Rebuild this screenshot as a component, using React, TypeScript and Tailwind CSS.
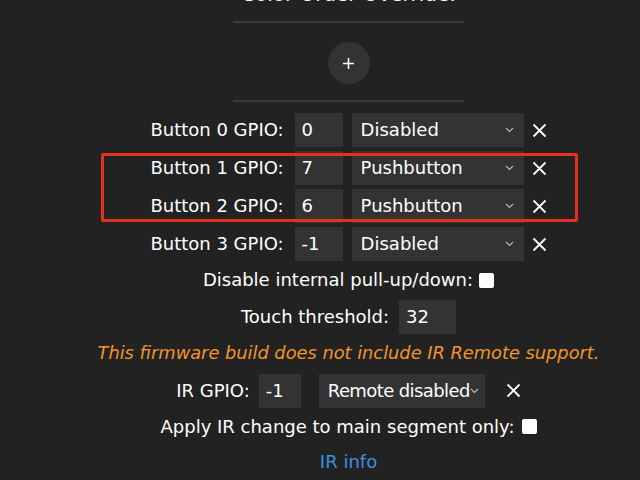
import React from "react";

const font = { fontFamily: '"DejaVu Sans", Verdana, sans-serif' };

const Chevron = () => (
  <svg width="9" height="6" viewBox="0 0 9 6" className="shrink-0">
    <path d="M1 1l3.5 3.5L8 1" fill="none" stroke="#bbb" strokeWidth="1.1" />
  </svg>
);

const Cross = () => (
  <svg width="15" height="15" viewBox="0 0 15 15" className="shrink-0">
    <path d="M1.5 1.5l12 12M13.5 1.5l-12 12" stroke="#fff" strokeWidth="1.8" />
  </svg>
);

const Field = ({ value, w }: { value: string; w: string }) => (
  <div className={`${w} h-[34px] bg-[#333] flex items-center pl-[7px] text-white`}>
    {value}
  </div>
);

const Select = ({ value, w, pr, tight }: { value: string; w: string; pr: string; tight?: boolean }) => (
  <div className={`${w} ${pr} h-[34px] bg-[#333] flex items-center justify-between pl-[9px] text-white`}>
    <span className={tight ? "whitespace-nowrap tracking-[-0.6px]" : "whitespace-nowrap"}>{value}</span>
    <Chevron />
  </div>
);

const Checkbox = () => <div className="w-[15px] h-[15px] bg-white rounded-[2px] shrink-0" />;

const buttons = [
  { n: 0, pin: "0", mode: "Disabled" },
  { n: 1, pin: "7", mode: "Pushbutton" },
  { n: 2, pin: "6", mode: "Pushbutton" },
  { n: 3, pin: "-1", mode: "Disabled" },
];

export default function App() {
  return (
    <div
      className="relative w-[640px] h-[480px] overflow-hidden bg-[#222] text-white text-[18px] leading-none"
      style={font}
    >
      <div className="pl-[57px] flex flex-col items-center">
        {/* section title, scrolled off the top */}
        <div className="-mt-[16px] h-[20px] text-[20px] whitespace-nowrap">Color Order Override:</div>
        <div className="mt-[17px] w-[231px] h-[2px] bg-[#3a3a3a]" />

        <div className="mt-[19px] w-[42px] h-[42px] rounded-full bg-[#333] flex items-center justify-center">
          <svg width="13" height="13" viewBox="0 0 13 13">
            <path d="M6.5 1v11M1 6.5h11" stroke="#fff" strokeWidth="1.6" />
          </svg>
        </div>
        <div className="mt-[16px] w-[231px] h-[2px] bg-[#3a3a3a]" />

        <div className="mt-[11px] flex flex-col items-center gap-[4px]">
          {buttons.map((b) => (
            <div key={b.n} className="flex items-center">
              <span className="mr-[11px] whitespace-nowrap">Button {b.n} GPIO:</span>
              <Field value={b.pin} w="w-[48px]" />
              <div className="w-[9px]" />
              <Select value={b.mode} w="w-[172px]" pr="pr-[10px]" />
              <div className="ml-[8px]">
                <Cross />
              </div>
            </div>
          ))}
        </div>

        <div className="mt-[10px] flex items-center gap-[6px]">
          <span>Disable internal pull-up/down:</span>
          <Checkbox />
        </div>

        <div className="mt-[11px] flex items-center gap-[10px]">
          <span>Touch threshold:</span>
          <Field value="32" w="w-[57px]" />
        </div>

        <div className="mt-[10px] italic text-[17.8px] text-[#f0962a] whitespace-nowrap">
          This firmware build does not include IR Remote support.
        </div>

        <div className="mt-[12px] flex items-center">
          <span className="mr-[9px]">IR GPIO:</span>
          <Field value="-1" w="w-[42px]" />
          <div className="w-[18px]" />
          <Select value="Remote disabled" w="w-[166px]" pr="pr-[8px]" tight />
          <div className="ml-[21px]">
            <Cross />
          </div>
        </div>

        <div className="mt-[10px] flex items-center gap-[7px]">
          <span>Apply IR change to main segment only:</span>
          <Checkbox />
        </div>

        <div className="mt-[17px] text-[#3d8fe3]">IR info</div>
      </div>

      {/* annotation highlight */}
      <div className="absolute left-[101px] top-[153px] w-[477px] h-[69px] border-[3px] border-[#e2321f] rounded-[2px]" />
    </div>
  );
}
